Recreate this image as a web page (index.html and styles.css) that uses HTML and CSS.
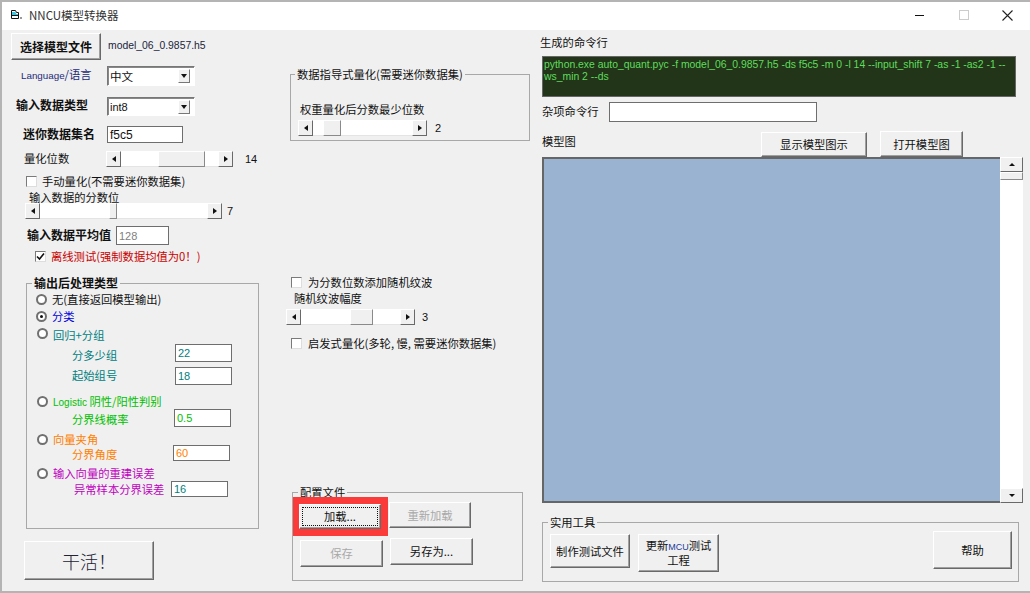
FILE: index.html
```html
<!DOCTYPE html>
<html lang="zh">
<head>
<meta charset="utf-8">
<title>NNCU模型转换器</title>
<link rel="stylesheet" href="styles.css">
</head>
<body>
<div class="window">
  <header class="titlebar">
    <svg class="app-icon" width="11" height="11" viewBox="0 0 11 11"><path d="M.5.5h4l1 2h2v6h-7z" fill="#fff" stroke="#111" stroke-width="1"/><path d="M1 2h3.5l.8 2H7v1H1z" fill="#35c8e0"/><path d="M1 5.5h6.5" stroke="#111" stroke-width="1"/><rect x="9" y="7" width="2" height="2" fill="#999"/></svg>
    <span class="title-text">NNCU模型转换器</span>
    <div class="win-controls">
      <span class="win-min"></span>
      <span class="win-max"></span>
      <svg class="win-close" width="11" height="11" viewBox="0 0 11 11"><path d="M.5.5l10 10M10.5.5l-10 10" stroke="#222" stroke-width="1.1" fill="none"/></svg>
    </div>
  </header>
  <main class="client">
    <section class="col col-left">
      <div class="row r-file"><button class="btn btn-file">选择模型文件</button><span class="file-name latin">model_06_0.9857.h5</span></div>
      <div class="row r-lang"><span class="lbl lbl-lang"><span class="latin">Language</span>/语言</span><div class="combo"><span class="combo-text">中文</span><span class="combo-arrow"></span></div></div>
      <div class="row r-type"><span class="lbl strong lbl-type">输入数据类型</span><div class="combo combo-short"><span class="combo-text latin">int8</span><span class="combo-arrow"></span></div></div>
      <div class="row r-ds"><span class="lbl strong lbl-ds">迷你数据集名</span><div class="field field-ds latin">f5c5</div></div>
      <div class="row r-bits"><span class="lbl lbl-bits">量化位数</span>
        <div class="scroll sc-bits"><span class="sc-arrow left"></span><span class="sc-track t1"></span><span class="sc-thumb"></span><span class="sc-track t2"></span><span class="sc-arrow right"></span></div>
        <span class="value latin v-bits">14</span></div>
      <div class="row r-manual"><span class="check"></span><span class="lbl">手动量化(不需要迷你数据集)</span></div>
      <div class="row r-frac-label"><span class="lbl">输入数据的分数位</span></div>
      <div class="row r-frac">
        <div class="scroll sc-frac"><span class="sc-arrow left"></span><span class="sc-track t1"></span><span class="sc-thumb"></span><span class="sc-track t2"></span><span class="sc-arrow right"></span></div>
        <span class="value latin v-frac">7</span></div>
      <div class="row r-mean"><span class="lbl strong lbl-mean">输入数据平均值</span><div class="field field-mean latin">128</div></div>
      <div class="row r-offline"><span class="check checked"><svg width="9" height="9" viewBox="0 0 9 9"><path d="M1 4.5l2.5 2.5L8 1.5" stroke="#111" stroke-width="1.6" fill="none"/></svg></span><span class="lbl c-red">离线测试(强制数据均值为0！)</span></div>

      <fieldset class="group g-post">
        <legend class="strong">输出后处理类型</legend>
        <div class="row p-none"><span class="radio"></span><span class="lbl">无(直接返回模型输出)</span></div>
        <div class="row p-class"><span class="radio on"></span><span class="lbl c-blue">分类</span></div>
        <div class="row p-reg"><span class="radio"></span><span class="lbl c-teal drop-2">回归+分组</span></div>
        <div class="row p-sub p-groups"><span class="lbl c-teal lbl-sub drop-3">分多少组</span><div class="field field-p c-teal latin">22</div></div>
        <div class="row p-sub p-start"><span class="lbl c-teal lbl-sub">起始组号</span><div class="field field-p c-teal latin">18</div></div>
        <div class="row p-reg p-log"><span class="radio"></span><span class="lbl c-green drop-1"><span class="latin logistic">Logistic</span> 阴性/阳性判别</span></div>
        <div class="row p-sub p-prob"><span class="lbl c-green lbl-sub lbl-prob drop-2">分界线概率</span><div class="field field-p c-green latin">0.5</div></div>
        <div class="row p-reg p-angle"><span class="radio"></span><span class="lbl c-orange">向量夹角</span></div>
        <div class="row p-sub p-deg"><span class="lbl c-orange lbl-sub lbl-deg drop-2">分界角度</span><div class="field field-p c-orange latin">60</div></div>
        <div class="row p-reg p-rec"><span class="radio"></span><span class="lbl c-mag drop-1">输入向量的重建误差</span></div>
        <div class="row p-sub p-err"><span class="lbl c-mag lbl-err drop-1">异常样本分界误差</span><div class="field field-p c-teal latin">16</div></div>
      </fieldset>
      <button class="btn btn-go">干活！</button>
    </section>

    <section class="col col-mid">
      <fieldset class="group g-guided">
        <legend>数据指导式量化(需要迷你数据集)</legend>
        <div class="row r-ws-label"><span class="lbl">权重量化后分数最少位数</span></div>
        <div class="row r-ws">
          <div class="scroll sc-ws"><span class="sc-arrow left"></span><span class="sc-track t1"></span><span class="sc-thumb"></span><span class="sc-track t2"></span><span class="sc-arrow right"></span></div>
          <span class="value latin v-ws">2</span></div>
      </fieldset>
      <div class="row r-dither"><span class="check"></span><span class="lbl">为分数位数添加随机纹波</span></div>
      <div class="row r-amp-label"><span class="lbl">随机纹波幅度</span></div>
      <div class="row r-amp">
        <div class="scroll sc-amp"><span class="sc-arrow left"></span><span class="sc-track t1"></span><span class="sc-thumb"></span><span class="sc-track t2"></span><span class="sc-arrow right"></span></div>
        <span class="value latin v-amp">3</span></div>
      <div class="row r-heur"><span class="check"></span><span class="lbl">启发式量化(多轮, 慢, 需要迷你数据集)</span></div>
      <fieldset class="group g-config">
        <legend>配置文件</legend>
        <div class="cfg-row">
          <div class="highlight"><button class="btn btn-load"><span class="focus">加载...</span></button></div>
          <button class="btn btn-reload" disabled>重新加载</button>
        </div>
        <div class="cfg-row cfg-row2">
          <button class="btn btn-save" disabled>保存</button>
          <button class="btn btn-saveas">另存为...</button>
        </div>
      </fieldset>
    </section>

    <section class="col col-right">
      <div class="lbl r-cmd-label">生成的命令行</div>
      <div class="cmd latin">python.exe auto_quant.pyc -f model_06_0.9857.h5 -ds f5c5 -m 0 -l 14 --input_shift 7 -as -1 -as2 -1 --ws_min 2 --ds</div>
      <div class="row r-misc"><span class="lbl lbl-misc">杂项命令行</span><div class="field field-misc"></div></div>
      <div class="r-model"><span class="lbl lbl-model">模型图</span><button class="btn btn-show">显示模型图示</button><button class="btn btn-open">打开模型图</button></div>
      <div class="canvas-wrap">
        <div class="canvas"></div>
        <div class="vscroll"><span class="v-arrow up"></span><span class="v-thumb"></span><span class="v-track"></span><span class="v-arrow down"></span></div>
      </div>
      <fieldset class="group g-tools">
        <legend>实用工具</legend>
        <div class="tools-row">
          <button class="btn btn-make">制作测试文件</button>
          <button class="btn btn-mcu">更新<span class="latin mcu">MCU</span>测试<br>工程</button>
          <button class="btn btn-help">帮助</button>
        </div>
      </fieldset>
    </section>
  </main>
</div>
</body>
</html>
```
FILE: styles.css
```css
* { box-sizing: border-box; }
html, body { margin: 0; padding: 0; }
body {
  width: 1030px; height: 593px; overflow: hidden;
  font-family: "Noto Sans CJK SC", "Liberation Sans", sans-serif;
  font-size: 11.3px; color: #111; background: #f0f0f0;
}
.window {
  width: 1030px; height: 593px; display: flex; flex-direction: column;
  border-top: 2px solid #b4b4b4; border-left: 2px solid #b4b4b4; border-bottom: 2px solid #b4b4b4;
  background: #f0f0f0;
}
.latin { font-family: "Liberation Sans", sans-serif; }

/* title bar */
.titlebar { height: 28px; flex: none; background: #fff; display: flex; align-items: center; padding: 0 0 2px 9px; }
.title-text { margin-left: 7px; font-size: 11.5px; color: #333; }
.win-controls { margin-left: auto; display: flex; align-items: center; height: 100%; }
.win-min { width: 9px; height: 1px; background: #111; margin-right: 35px; }
.win-max { width: 10px; height: 10px; border: 1px solid #ccc; margin-right: 33px; }
.win-close { margin-right: 17px; }

.client { flex: 1; display: flex; min-height: 0; }
.col { display: flex; flex-direction: column; align-items: flex-start; }
.col-left { width: 278px; }
.col-mid { width: 260px; }
.col-right { width: 490px; }
.row { display: flex; align-items: center; flex: none; }
.lbl { line-height: 12px; padding-bottom: 2px; white-space: nowrap; flex: none; }
.drop-1 { padding-bottom: 0; }
.drop-2 { padding-bottom: 0; padding-top: 2px; }
.drop-3 { padding-bottom: 0; padding-top: 4px; }
.strong, legend.strong { font-weight: 700; font-size: 12px; }
.value { font-size: 11px; }

.c-red { color: #c80000; }
.c-blue { color: #0000d8; }
.c-teal { color: #008080; }
.c-green { color: #00c000; }
.c-orange { color: #ff8000; }
.c-mag { color: #c000c0; }

/* buttons */
.btn {
  font: inherit; color: #111; background: #f0f0f0; padding: 0; flex: none;
  border: 1px solid; border-color: #fff #696969 #696969 #fff;
  box-shadow: inset -1px -1px 0 #a0a0a0; line-height: 13px;
}
.btn:disabled { color: #a8a8a8; }
.btn-file { width: 90px; height: 27px; font-weight: 700; font-size: 12px; }
.btn-go { width: 130px; height: 39px; margin: 12px 0 0 22px; font-size: 18px; line-height: 20px; font-weight: 300; color: #223; }

/* fields */
.field { background: #fff; border: 1px solid #6e6e6e; padding-left: 2px; display: flex; align-items: center; font-size: 11px; flex: none; }
.combo {
  width: 88px; height: 20px; background: #fff; border: 1px solid; border-color: #777 #fff #fff #777;
  box-shadow: inset 1px 1px 0 #888; display: flex; align-items: center; justify-content: space-between; padding: 0 4px 0 2px;
  font-size: 11.5px; flex: none;
}
.combo-short { height: 19px; }
.combo-short .combo-text { font-size: 11px; }
.combo-arrow {
  width: 12px; height: 14px; background: #f0f0f0; border: 1px solid; border-color: #fff #777 #777 #fff;
  display: flex; align-items: center; justify-content: center;
}
.combo-arrow::before { content: ""; border-style: solid; border-width: 4px 3.5px 0; border-color: #111 transparent transparent; }

/* scrollbars */
.scroll { height: 16px; display: flex; flex: none; background: #fff; }
.sc-arrow {
  width: 15px; flex: none; background: #f0f0f0; border: 1px solid; border-color: #fff #696969 #696969 #fff;
  display: flex; align-items: center; justify-content: center;
}
.sc-arrow.left::before { content: ""; border-style: solid; border-width: 3.5px 4px 3.5px 0; border-color: transparent #111 transparent transparent; }
.sc-arrow.right::before { content: ""; border-style: solid; border-width: 3.5px 0 3.5px 4px; border-color: transparent transparent transparent #111; }
.sc-track { flex: none; background: #fff; border-bottom: 1px solid #e4e4e4; }
.sc-thumb { flex: none; background: #f0f0f0; border: 1px solid; border-color: #fff #8a8a8a #8a8a8a #fff; }
.sc-bits { width: 127px; }
.sc-bits .t1 { width: 37px; } .sc-bits .sc-thumb { width: 47px; } .sc-bits .t2 { width: 13px; }
.sc-frac { width: 197px; }
.sc-frac .t1 { width: 69px; } .sc-frac .sc-thumb { width: 8px; } .sc-frac .t2 { width: 90px; }
.sc-ws { width: 129px; }
.sc-ws .t1 { width: 10px; } .sc-ws .sc-thumb { width: 18px; } .sc-ws .t2 { width: 71px; }
.sc-amp { width: 129px; }
.sc-amp .t1 { width: 49px; } .sc-amp .sc-thumb { width: 23px; } .sc-amp .t2 { width: 27px; }

/* checks and radios */
.check {
  width: 11px; height: 11px; background: #fff; border: 1px solid; border-color: #7a7a7a #ddd #ddd #7a7a7a;
  flex: none; display: flex; align-items: center; justify-content: center; margin-right: 5px;
}
.col-mid .check { margin-right: 6px; }
.radio {
  width: 11px; height: 11px; border-radius: 50%; background: #fff; border: 2px solid #707070;
  flex: none; margin-right: 5px; display: flex; align-items: center; justify-content: center;
}
.radio.on::before { content: ""; width: 3px; height: 3px; border-radius: 50%; background: #111; }

/* groups */
.group { margin: 0; padding: 0; min-width: 0; border: 1px solid #a8a8a8; flex: none; }
.group legend { padding: 0 2px; margin-left: 5px; line-height: 12px; white-space: nowrap; }
.g-guided legend { margin-left: 4px; }

/* left column */
.r-file { margin-top: 3px; height: 27px; padding-left: 9px; }
.file-name { margin-left: 7px; font-size: 10.4px; margin-top: -3px; color: #1a2440; }
.r-lang { margin-top: 6px; height: 20px; padding-left: 19px; }
.lbl-lang { width: 86px; color: #1c2a7a; }
.lbl-lang .latin { font-size: 9.8px; }
.r-type { margin-top: 11px; height: 19px; padding-left: 14px; }
.lbl-type { width: 91px; padding-bottom: 4px; }
.r-ds { margin-top: 10px; height: 17px; padding-left: 21px; }
.lbl-ds { width: 84px; }
.field-ds { width: 76px; height: 17px; font-size: 12px; }
.r-bits { margin-top: 8px; height: 16px; padding-left: 22px; }
.lbl-bits { width: 82px; }
.v-bits { margin-left: 12px; }
.r-manual { margin-top: 9px; height: 11px; padding-left: 24px; }
.r-frac-label { margin-top: 5px; height: 11px; padding-left: 27px; }
.r-frac { margin-top: 0; height: 16px; padding-left: 23px; }
.v-frac { margin-left: 5px; }
.r-mean { margin-top: 7px; height: 19px; padding-left: 25px; }
.lbl-mean { width: 89px; }
.field-mean { width: 53px; height: 19px; color: #808080; }
.r-offline { margin-top: 6px; height: 11px; padding-left: 33px; }
.g-post { width: 233px; height: 252px; margin: 15px 0 0 24px; }
.p-none { margin-top: 5px; height: 11px; padding-left: 9px; }
.p-class { margin-top: 6px; height: 11px; padding-left: 9px; }
.p-reg { margin-top: 6px; height: 11px; padding-left: 10px; }
.p-sub { height: 18px; padding-left: 45px; }
.p-groups { margin-top: 5px; }
.p-start { margin-top: 5px; }
.p-log { margin-top: 11px; }
.p-prob { margin-top: 2px; }
.p-angle { margin-top: 7px; }
.p-deg { margin-top: 0; height: 16px; }
.p-rec { margin-top: 6px; height: 12px; }
.p-err { margin-top: 2px; height: 16px; padding-left: 47px; }
.lbl-sub { width: 103px; }
.lbl-prob { width: 102px; }
.lbl-deg { width: 101px; }
.lbl-err { width: 97px; }
.field-p { width: 57px; height: 100%; }
.logistic { font-size: 10px; }

/* middle column */
.g-guided { width: 240px; height: 73px; margin: 38px 0 0 10px; }
.r-ws-label { margin-top: 24px; padding-left: 9px; height: 12px; }
.r-ws { margin-top: 4px; padding-left: 7px; height: 16px; }
.v-ws { margin-left: 8px; }
.r-dither { margin-top: 136px; height: 11px; padding-left: 11px; }
.r-amp-label { margin-top: 5px; height: 12px; padding-left: 14px; }
.r-amp { margin-top: 4px; height: 16px; padding-left: 6px; }
.v-amp { margin-left: 7px; }
.r-heur { margin-top: 13px; height: 11px; padding-left: 11px; }
.g-config { width: 231px; height: 95px; margin: 137px 0 0 12px; }
.cfg-row { display: flex; align-items: flex-start; }
.highlight { width: 95px; height: 39px; margin-top: -1px; background: #fb3a3a; padding: 7px 0 0 6px; flex: none; }
.btn-load { width: 82px; height: 25px; }
.focus { display: block; margin: 2px; height: 19px; line-height: 17px; border: 1px dotted #111; }
.btn-reload { width: 82px; height: 26px; margin: 4px 0 0 1px; }
.cfg-row2 { padding-left: 7px; }
.btn-save { width: 83px; height: 27px; margin-top: 4px; }
.btn-saveas { width: 83px; height: 27px; margin: 2px 0 0 7px; }

/* right column */
.r-cmd-label { margin-top: 6px; }
.cmd {
  width: 474px; height: 41px; margin: 6px 0 0 2px; background: #233518; color: #5fdc5f;
  border: 1px solid #666; padding: 2px 1px 0 1px; font-size: 10.4px; line-height: 12px;
}
.r-misc { margin-top: 5px; padding-left: 2px; height: 20px; }
.lbl-misc { width: 67px; }
.field-misc { width: 208px; height: 20px; }
.r-model { margin-top: 9px; padding-left: 2px; display: flex; align-items: flex-start; height: 26px; }
.lbl-model { width: 219px; margin-top: 4px; }
.btn-show { width: 106px; height: 25px; margin-top: 1px; }
.btn-open { width: 83px; height: 26px; margin-left: 13px; }
.canvas-wrap { margin-left: 2px; width: 481px; height: 346px; display: flex; flex: none; }
.canvas { flex: 1; background: #9ab3d0; border: 2px solid #666; border-right: none; }
.vscroll { width: 23px; flex: none; display: flex; flex-direction: column; background: #fff; }
.v-arrow {
  height: 15px; flex: none; background: #f0f0f0; border: 1px solid; border-color: #fff #696969 #696969 #fff;
  display: flex; align-items: center; justify-content: center;
}
.v-arrow.up::before { content: ""; border-style: solid; border-width: 0 3.5px 3.5px; border-color: transparent transparent #111; }
.v-arrow.down::before { content: ""; border-style: solid; border-width: 3.5px 3.5px 0; border-color: #111 transparent transparent; }
.v-thumb { height: 8px; flex: none; background: #f0f0f0; border: 1px solid; border-color: #fff #8a8a8a #8a8a8a #fff; }
.v-track { flex: 1; }
.g-tools { width: 477px; height: 66px; margin: 13px 0 0 2px; }
.tools-row { display: flex; align-items: flex-start; padding: 3px 6px 0 7px; }
.btn-make { width: 80px; height: 34px; margin-top: 3px; }
.btn-mcu { width: 81px; height: 38px; margin: 3px 0 0 8px; }
.mcu { font-size: 9px; color: #1c3a9a; }
.btn-help { width: 79px; height: 38px; margin-left: auto; }
```
